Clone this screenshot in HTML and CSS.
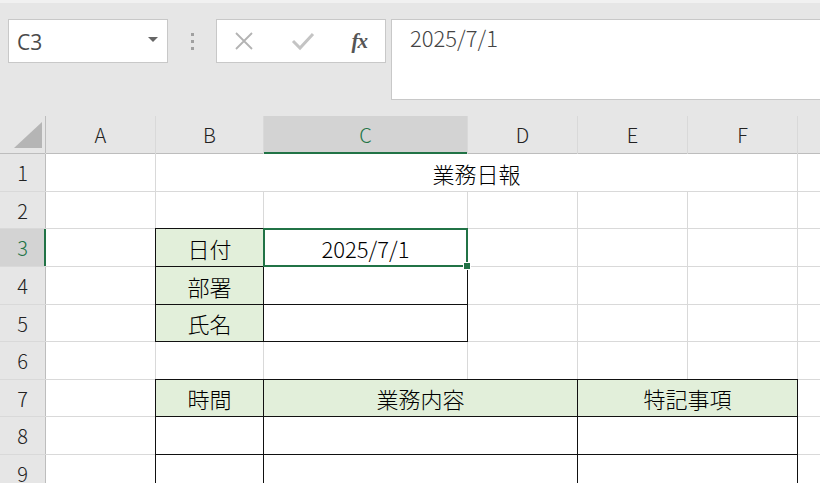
FILE: index.html
```html
<!DOCTYPE html>
<html lang="ja">
<head>
    <meta charset="UTF-8">
    <title>業務日報 - Excel</title>
    <link rel="stylesheet" href="styles.css">
</head>
<body>

    <div class="toolbar">
        <div class="name-box">
            <span class="name-text">C3</span>
            <svg class="name-arrow" width="10" height="6" viewBox="0 0 10 6"><polygon points="0,0 10,0 5,5" fill="#666"/></svg>
        </div>
        <div class="grip">
            <span></span><span></span><span></span>
        </div>
        <div class="fx-box">
            <svg class="fx-icon" width="22" height="20" viewBox="0 0 22 20">
                <path d="M3 2 L19 18 M19 2 L3 18" stroke="#b3b3b3" stroke-width="1.8" fill="none"/>
            </svg>
            <svg class="fx-icon" width="24" height="20" viewBox="0 0 24 20">
                <path d="M2 10 L9 17 L22 3" stroke="#c4c4c4" stroke-width="3" fill="none"/>
            </svg>
            <span class="fx-text">fx</span>
        </div>
        <div class="formula">2025/7/1</div>
    </div>

    <div class="sheet">
        <!-- header row -->
        <div class="corner">
            <svg width="45" height="37" viewBox="0 0 45 37"><polygon points="14,32 42,32 42,6" fill="#b5b5b5"/></svg>
        </div>
        <div class="col-head">A</div>
        <div class="col-head">B</div>
        <div class="col-head active">C</div>
        <div class="col-head">D</div>
        <div class="col-head">E</div>
        <div class="col-head">F</div>
        <div class="col-head"></div>

        <!-- 1 -->
        <div class="row-head">1</div>
        <div class="cell"></div>
        <div class="cell span5">業務日報</div>
        <div class="cell"></div>

        <!-- 2 -->
        <div class="row-head">2</div>
        <div class="cell"></div>
        <div class="cell"></div>
        <div class="cell"></div>
        <div class="cell"></div>
        <div class="cell"></div>
        <div class="cell"></div>
        <div class="cell"></div>

        <!-- 3 -->
        <div class="row-head active">3</div>
        <div class="cell"></div>
        <div class="cell boxed green">日付</div>
        <div class="cell boxed selected">2025/7/1<span class="handle"></span></div>
        <div class="cell"></div>
        <div class="cell"></div>
        <div class="cell"></div>
        <div class="cell"></div>

        <!-- 4 -->
        <div class="row-head">4</div>
        <div class="cell"></div>
        <div class="cell boxed green">部署</div>
        <div class="cell boxed"></div>
        <div class="cell"></div>
        <div class="cell"></div>
        <div class="cell"></div>
        <div class="cell"></div>

        <!-- 5 -->
        <div class="row-head">5</div>
        <div class="cell"></div>
        <div class="cell boxed green">氏名</div>
        <div class="cell boxed"></div>
        <div class="cell"></div>
        <div class="cell"></div>
        <div class="cell"></div>
        <div class="cell"></div>

        <!-- 6 -->
        <div class="row-head">6</div>
        <div class="cell"></div>
        <div class="cell"></div>
        <div class="cell"></div>
        <div class="cell"></div>
        <div class="cell"></div>
        <div class="cell"></div>
        <div class="cell"></div>

        <!-- 7 -->
        <div class="row-head">7</div>
        <div class="cell"></div>
        <div class="cell boxed green">時間</div>
        <div class="cell boxed green span2">業務内容</div>
        <div class="cell boxed green span2">特記事項</div>
        <div class="cell"></div>

        <!-- 8 -->
        <div class="row-head">8</div>
        <div class="cell"></div>
        <div class="cell boxed"></div>
        <div class="cell boxed span2"></div>
        <div class="cell boxed span2"></div>
        <div class="cell"></div>

        <!-- 9 -->
        <div class="row-head">9</div>
        <div class="cell"></div>
        <div class="cell boxed"></div>
        <div class="cell boxed span2"></div>
        <div class="cell boxed span2"></div>
        <div class="cell"></div>
    </div>

</body>
</html>
```

FILE: styles.css
```css
body {
    margin: 0;
    width: 820px;
    height: 483px;
    overflow: hidden;
    background-color: #e6e6e6;
    font-family: "Noto Sans CJK JP", "Noto Sans", sans-serif;
    color: #222;
}

.toolbar {
    height: 113px;
    box-sizing: border-box;
    border-top: 3px solid #f1f1f1;
    padding: 16px 0 0 8px;
    display: flex;
    align-items: flex-start;
    width: 1000px;
}

.name-box {
    width: 160px;
    height: 44px;
    box-sizing: border-box;
    background-color: #fff;
    border: 1px solid #c8c8c8;
    display: flex;
    align-items: center;
    justify-content: space-between;
    padding: 0 9px 0 8px;
}

.name-text {
    font-family: "Open Sans", "Noto Sans", sans-serif;
    font-size: 21px;
    color: #4a4a4a;
    padding-top: 2px;
}

.name-arrow {
    margin-top: -3px;
}

.grip {
    width: 48px;
    height: 44px;
    display: flex;
    flex-direction: column;
    align-items: center;
    justify-content: center;
    gap: 4px;
}

.grip span {
    width: 3px;
    height: 3px;
    background-color: #a0a0a0;
}

.fx-box {
    width: 170px;
    height: 44px;
    box-sizing: border-box;
    background-color: #fff;
    border: 1px solid #c8c8c8;
    display: flex;
    align-items: center;
    justify-content: space-between;
    padding: 0 18px 0 16px;
    margin-right: 5px;
}

.fx-text {
    font-family: "Liberation Serif", serif;
    font-style: italic;
    font-weight: bold;
    font-size: 21px;
    color: #555;
    letter-spacing: -1px;
}

.formula {
    width: 460px;
    height: 81px;
    box-sizing: border-box;
    background-color: #fff;
    border: 1px solid #c8c8c8;
    padding: 1px 0 0 18px;
    font-size: 22px;
    font-weight: 300;
    color: #444;
}

.sheet {
    margin-top: 3px;
    display: grid;
    grid-template-columns: 45px 109px 107px 203px 109px 109px 109px 40px;
    grid-template-rows: 37px 37px 36px 37px 37px 36px 37px 36px 37px 36px;
    gap: 1px;
    background-color: #d9d9d9;
    width: 850px;
}

.corner {
    background-color: #e6e6e6;
    box-shadow: 0 1px 0 #bdbdbd, 1px 0 0 #bdbdbd;
}

.corner svg {
    display: block;
}

.col-head {
    background-color: #e6e6e6;
    box-shadow: 0 1px 0 #bdbdbd;
    display: flex;
    align-items: center;
    justify-content: center;
    font-size: 20px;
    font-weight: 300;
    color: #222;
}

.col-head.active {
    background-color: #d3d3d3;
    color: #217346;
    box-shadow: inset 0 -1px 0 #217346, 0 1px 0 #217346;
}

.row-head {
    background-color: #e6e6e6;
    box-shadow: 1px 0 0 #bdbdbd;
    display: flex;
    align-items: center;
    justify-content: center;
    font-size: 20px;
    font-weight: 300;
    color: #222;
}

.row-head.active {
    background-color: #d3d3d3;
    color: #217346;
    box-shadow: inset -1px 0 0 #217346, 1px 0 0 #217346;
}

.cell {
    background-color: #fff;
    display: flex;
    align-items: center;
    justify-content: center;
    font-size: 22px;
    font-weight: 300;
    color: #000;
    box-sizing: border-box;
}

.span5 {
    grid-column: span 5;
}

.span2 {
    grid-column: span 2;
}

.boxed {
    box-shadow: 0 0 0 1px #111;
}

.green {
    background-color: #e2efda;
}

.selected {
    position: relative;
    z-index: 2;
    box-shadow: 0 0 0 1px #217346, inset 0 0 0 1px #217346;
}

.handle {
    position: absolute;
    right: -4px;
    bottom: -4px;
    width: 6px;
    height: 6px;
    background-color: #217346;
    border: 1px solid #fff;
}
```
